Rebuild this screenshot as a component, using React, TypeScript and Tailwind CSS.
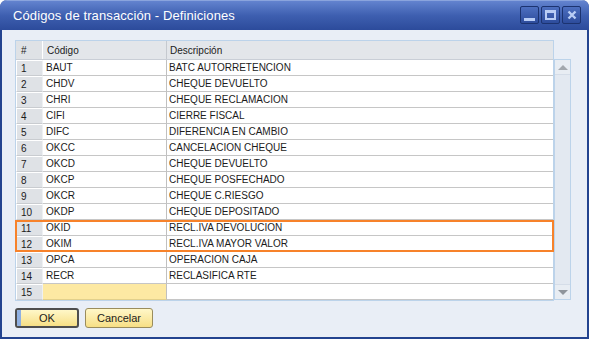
import React from 'react'

const rows: [string, string][] = [
  ['BAUT', 'BATC AUTORRETENCION'],
  ['CHDV', 'CHEQUE DEVUELTO'],
  ['CHRI', 'CHEQUE RECLAMACION'],
  ['CIFI', 'CIERRE FISCAL'],
  ['DIFC', 'DIFERENCIA EN CAMBIO'],
  ['OKCC', 'CANCELACION CHEQUE'],
  ['OKCD', 'CHEQUE DEVUELTO'],
  ['OKCP', 'CHEQUE POSFECHADO'],
  ['OKCR', 'CHEQUE C.RIESGO'],
  ['OKDP', 'CHEQUE DEPOSITADO'],
  ['OKID', 'RECL.IVA DEVOLUCION'],
  ['OKIM', 'RECL.IVA MAYOR VALOR'],
  ['OPCA', 'OPERACION CAJA'],
  ['RECR', 'RECLASIFICA RTE'],
  ['', ''],
]

const WinButton = ({ kind }: { kind: 'min' | 'max' | 'close' }) => (
  <div className="w-[19px] h-[18px] rounded-[2px] border border-[#1c3370] bg-gradient-to-b from-[#4d6fc0] to-[#2d4c9c] flex items-center justify-center">
    {kind === 'min' && <div className="w-[11px] h-[3px] bg-[#b9cdf5] mt-[8px]" />}
    {kind === 'max' && <div className="w-[11px] h-[10px] border-2 border-t-[3px] border-[#b9cdf5]" />}
    {kind === 'close' && (
      <svg width="10" height="10" viewBox="0 0 10 10">
        <path d="M1.5 1.5 L8.5 8.5 M8.5 1.5 L1.5 8.5" stroke="#b9cdf5" strokeWidth="2.4" />
      </svg>
    )}
  </div>
)

const App = () => {
  return (
    <div
      className="w-[589px] h-[339px] flex flex-col bg-[#23438f] rounded-t-[7px] overflow-hidden"
      style={{ fontFamily: '"Liberation Sans", Arial, sans-serif' }}
    >
      <div className="h-[30px] shrink-0 flex items-center justify-between pl-[13px] pr-[8px] bg-gradient-to-b from-[#6383cf] via-[#3e5fb0] to-[#2c4b9b] border-t border-[#8aa4dd]">
        <span className="text-white text-[13px] tracking-[0.1px]">Códigos de transacción - Definiciones</span>
        <div className="flex gap-[2px] pb-[1px]">
          <WinButton kind="min" />
          <WinButton kind="max" />
          <WinButton kind="close" />
        </div>
      </div>
      <div className="flex-1 mx-[2px] mb-[2px] bg-[#e9eef6] pt-[10px] pl-[13px] flex flex-col text-[10px] text-[#1b1b1b]">
        <div className="flex">
          <div className="w-[539px] border border-[#bcd3ea] bg-white">
            <div className="flex h-[19px] bg-[#e3e6ea] border-b border-[#c9ced6]">
              <div className="w-[27px] pl-[5px] flex items-center border-r border-white bg-[#dfe2e6]">#</div>
              <div className="w-[124px] pl-[4px] flex items-center border-r border-[#c5c9cf]">Código</div>
              <div className="flex-1 pl-[3px] flex items-center">Descripción</div>
            </div>
            <div className="relative">
              {rows.map((r, i) => (
                <div key={i} className="flex h-[16px]">
                  <div className="w-[27px] pl-[4px] flex items-center bg-[#dfe2e6] border-t border-l border-white border-b border-b-[#c9ccd0] border-r border-r-[#eef0f2]">
                    {i + 1}
                  </div>
                  <div
                    className={
                      i === 14
                        ? 'w-[124px] pl-[3px] flex items-center bg-[#fde9a3] border-b border-[#e2d08c] border-r border-r-[#c0c0c0]'
                        : 'w-[124px] pl-[3px] flex items-center border-b border-[#c6c6c6] border-r border-r-[#c0c0c0]'
                    }
                  >
                    {r[0]}
                  </div>
                  <div className="flex-1 pl-[2px] flex items-center border-b border-[#c6c6c6]">{r[1]}</div>
                </div>
              ))}
              <div className="absolute left-[-1px] right-[-1px] top-[160px] h-[32px] border-2 border-[#f7822a] pointer-events-none" />
            </div>
          </div>
          <div className="w-[17px] mt-[19px] h-[241px] border border-[#bcd3ea] bg-[#e3e9f1] flex flex-col justify-between">
            <div className="h-[15px] flex items-center justify-center bg-[#e8edf3] border-b border-[#d5dde8]">
              <div className="w-0 h-0 border-l-[5px] border-r-[5px] border-b-[5px] border-l-transparent border-r-transparent border-b-[#a3a8ae]" />
            </div>
            <div className="h-[15px] flex items-center justify-center bg-[#e8edf3] border-t border-[#d5dde8]">
              <div className="w-0 h-0 border-l-[5px] border-r-[5px] border-t-[5px] border-l-transparent border-r-transparent border-t-[#8f959c]" />
            </div>
          </div>
        </div>
        <div className="flex gap-[6px] mt-[7px] text-[11px]">
          <button className="relative w-[64px] h-[20px] rounded-[3px] border-2 border-[#4e4e4e] bg-gradient-to-b from-[#fff7c8] to-[#f7df85] flex items-center justify-center overflow-hidden">
            <span className="absolute left-0 top-0 bottom-0 w-[4px] bg-[#8fb0e2]" />
            OK
          </button>
          <button className="w-[68px] h-[20px] rounded-[3px] border border-[#9a8c5c] bg-gradient-to-b from-[#fff7c8] to-[#f7df85] flex items-center justify-center">
            Cancelar
          </button>
        </div>
      </div>
    </div>
  )
}

export default App
